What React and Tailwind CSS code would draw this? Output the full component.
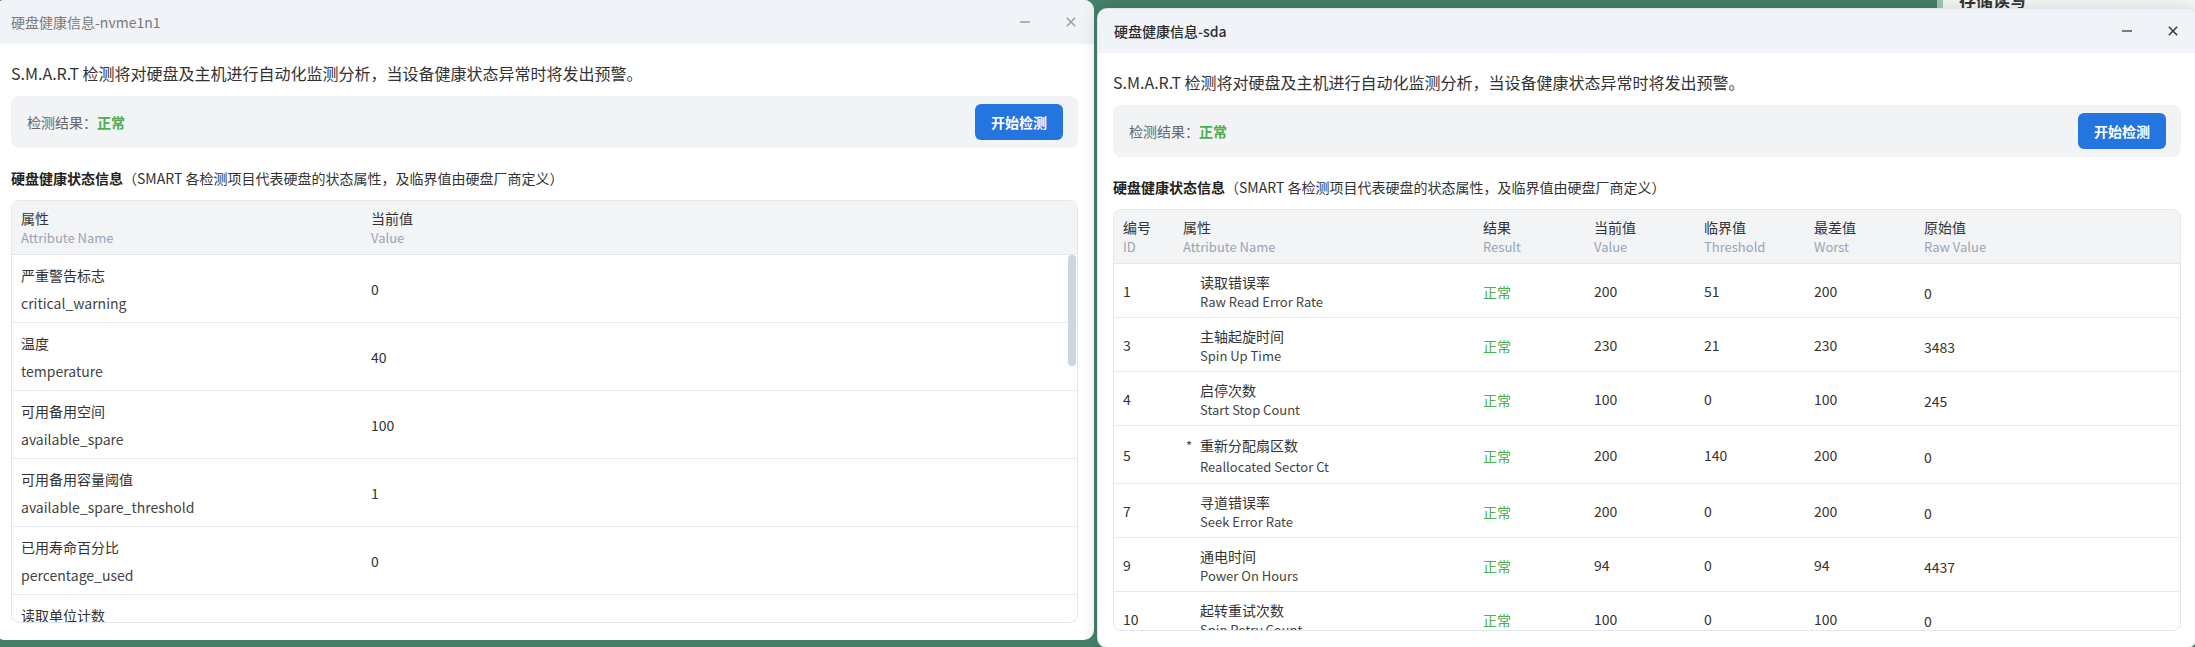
import React from "react";

const leftRows = [
  ["严重警告标志", "critical_warning", "0"],
  ["温度", "temperature", "40"],
  ["可用备用空间", "available_spare", "100"],
  ["可用备用容量阈值", "available_spare_threshold", "1"],
  ["已用寿命百分比", "percentage_used", "0"],
  ["读取单位计数", "data_units_read", ""],
];

const rightRows = [
  ["1", "读取错误率", "Raw Read Error Rate", "200", "51", "200", "0", false],
  ["3", "主轴起旋时间", "Spin Up Time", "230", "21", "230", "3483", false],
  ["4", "启停次数", "Start Stop Count", "100", "0", "100", "245", false],
  ["5", "重新分配扇区数", "Reallocated Sector Ct", "200", "140", "200", "0", true],
  ["7", "寻道错误率", "Seek Error Rate", "200", "0", "200", "0", false],
  ["9", "通电时间", "Power On Hours", "94", "0", "94", "4437", false],
  ["10", "起转重试次数", "Spin Retry Count", "100", "0", "100", "0", false],
];

function TitleBar({ title, active }) {
  return (
    <div className="h-[44px] shrink-0 bg-[#f0f3f8] flex items-center pl-[16px]">
      <span
        className={
          "text-[14px] leading-[20px] " +
          (active ? "text-[#2b2b2b] font-medium" : "text-[#7a7a7a]")
        }
      >
        {title}
      </span>
      <div className="flex-1" />
      <div className="w-[46px] h-[44px] flex items-center justify-center">
        <svg width="12" height="12" viewBox="0 0 12 12">
          <line x1="1" y1="6" x2="11" y2="6" stroke={active ? "#555" : "#9a9a9a"} strokeWidth="1.4" />
        </svg>
      </div>
      <div className="w-[46px] h-[44px] flex items-center justify-center">
        <svg width="12" height="12" viewBox="0 0 12 12">
          <path d="M1.8 1.8 L10.2 10.2 M10.2 1.8 L1.8 10.2" stroke={active ? "#333" : "#9a9a9a"} strokeWidth="1.4" fill="none" />
        </svg>
      </div>
    </div>
  );
}

function Intro() {
  return (
    <>
      <p className="text-[16px] leading-[24px] text-[#333]">
        S.M.A.R.T 检测将对硬盘及主机进行自动化监测分析，当设备健康状态异常时将发出预警。
      </p>
      <div className="mt-[11px] h-[52px] shrink-0 rounded-lg bg-[#f2f3f5] flex items-center justify-between pl-[16px] pr-[15px]">
        <span className="text-[14px] text-[#666]">
          检测结果：<span className="text-[#4caf50] font-semibold">正常</span>
        </span>
        <button className="w-[88px] h-[36px] rounded-md bg-[#2575e0] text-white text-[14px] font-bold">
          开始检测
        </button>
      </div>
      <h3 className="mt-[20px] text-[14px] leading-[20px] text-[#333]">
        <span className="font-bold text-[#222]">硬盘健康状态信息</span>
        （SMART 各检测项目代表硬盘的状态属性，及临界值由硬盘厂商定义）
      </h3>
    </>
  );
}

function HeadCell({ zh, en }) {
  return (
    <div className="px-[9px] flex flex-col justify-center pt-[1px]">
      <div className="text-[14px] leading-[19px] text-[#333]">{zh}</div>
      <div className="text-[13px] leading-[19px] text-[#98a4b6]">{en}</div>
    </div>
  );
}

function LeftWindow() {
  return (
    <div className="absolute left-[-5px] top-0 w-[1099px] h-[640px] rounded-[10px] bg-white overflow-hidden flex flex-col">
      <TitleBar title="硬盘健康信息-nvme1n1" active={false} />
      <div className="flex-1 min-h-0 flex flex-col px-[16px] pt-[17px] pb-[17px]">
        <Intro />
        <div className="mt-[12px] flex-1 min-h-0 relative border border-[#e2e7ee] rounded-lg overflow-hidden">
          <div className="grid grid-cols-[350px_495px_1fr] h-[54px] bg-[#f3f4f6] border-b border-[#e2e7ee]">
            <HeadCell zh="属性" en="Attribute Name" />
            <HeadCell zh="当前值" en="Value" />
            <div />
          </div>
          {leftRows.map((r, i) => (
            <div key={i} className="grid grid-cols-[350px_495px_1fr] h-[68px] border-b border-[#e6eaf0] items-center">
              <div className="px-[9px] flex flex-col">
                <div className="text-[14px] leading-[20px] text-[#333]">{r[0]}</div>
                <div className="mt-[8px] text-[14px] leading-[20px] text-[#444]">{r[1]}</div>
              </div>
              <div className="px-[9px] text-[14px] leading-[20px] text-[#333]">{r[2]}</div>
              <div />
            </div>
          ))}
          <div className="absolute right-[1px] top-[54px] w-[8px] h-[111px] rounded-full bg-[#cdd5df]" />
        </div>
      </div>
    </div>
  );
}

function RightWindow() {
  const cols = "grid grid-cols-[60px_300px_111px_110px_110px_110px_150px_1fr]";
  return (
    <div className="absolute left-[1097px] top-[8px] w-[1100px] h-[640px] rounded-[10px] bg-white overflow-hidden flex flex-col border border-black/10 shadow-[0_0_18px_rgba(0,0,0,0.14)]">
      <TitleBar title="硬盘健康信息-sda" active={true} />
      <div className="flex-1 min-h-0 flex flex-col px-[15px] pt-[17px] pb-[16px]">
        <Intro />
        <div className="mt-[12px] flex-1 min-h-0 border border-[#e2e7ee] rounded-lg overflow-hidden">
          <div className={cols + " h-[54px] bg-[#f3f4f6] border-b border-[#e2e7ee]"}>
            <HeadCell zh="编号" en="ID" />
            <HeadCell zh="属性" en="Attribute Name" />
            <HeadCell zh="结果" en="Result" />
            <HeadCell zh="当前值" en="Value" />
            <HeadCell zh="临界值" en="Threshold" />
            <HeadCell zh="最差值" en="Worst" />
            <HeadCell zh="原始值" en="Raw Value" />
            <div />
          </div>
          {rightRows.map((r, i) => (
            <div
              key={i}
              className={
                cols +
                " border-b border-[#e6eaf0] items-center pt-[2px] text-[14px] text-[#333] " +
                (r[7] ? "h-[58px]" : "h-[54px]")
              }
            >
              <div className="px-[9px]">{r[0]}</div>
              <div className="px-[9px] flex items-start">
                <div
                  className={
                    "w-[17px] shrink-0 text-[13px] text-[#444] pl-[3px] " +
                    (r[7] ? "leading-[21px]" : "leading-[19px]")
                  }
                >
                  {r[7] ? "*" : ""}
                </div>
                <div className="flex flex-col">
                  <div className={"text-[14px] text-[#333] " + (r[7] ? "leading-[21px]" : "leading-[19px]")}>{r[1]}</div>
                  <div className={"text-[13px] text-[#444] " + (r[7] ? "leading-[21px]" : "leading-[19px]")}>{r[2]}</div>
                </div>
              </div>
              <div className="px-[9px] text-[#4caf50] pt-[2px]">正常</div>
              <div className="px-[9px]">{r[3]}</div>
              <div className="px-[9px]">{r[4]}</div>
              <div className="px-[9px]">{r[5]}</div>
              <div className="px-[9px] pt-[3px]">{r[6]}</div>
              <div />
            </div>
          ))}
        </div>
      </div>
    </div>
  );
}

export default function App() {
  return (
    <div className="relative w-[2195px] h-[647px] overflow-hidden bg-[#44806a] font-['Noto_Sans_CJK_SC','Noto_Sans',sans-serif]">
      <div className="absolute left-[1937px] top-[-40px] w-[300px] h-[56px] bg-[#f6f7f7] border-l-[6px] border-[#a7c6b6]">
        <div className="absolute left-[16px] top-[30px] text-[17px] leading-[20px] font-bold text-[#333]">存储读写</div>
      </div>
      <LeftWindow />
      <RightWindow />
    </div>
  );
}
